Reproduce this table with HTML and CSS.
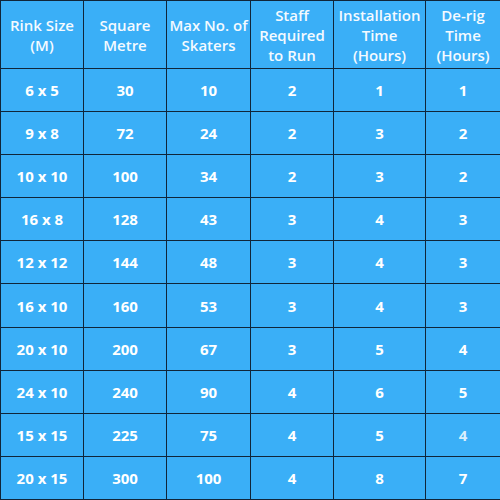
FILE: index.html
```html
<!DOCTYPE html>
<html>
<head>
<meta charset="utf-8">
<link rel="stylesheet" href="styles.css">
</head>
<body>
<table class="rink-table">
  <colgroup>
    <col class="c1"><col class="c2"><col class="c3"><col class="c4"><col class="c5"><col class="c6">
  </colgroup>
  <thead>
    <tr>
      <th>Rink Size<br>(M)</th>
      <th>Square<br>Metre</th>
      <th>Max No. of<br>Skaters</th>
      <th>Staff<br>Required<br>to Run</th>
      <th>Installation<br>Time<br>(Hours)</th>
      <th>De-rig<br>Time<br>(Hours)</th>
    </tr>
  </thead>
  <tbody>
    <tr><td>6 x 5</td><td>30</td><td>10</td><td>2</td><td>1</td><td>1</td></tr>
    <tr><td>9 x 8</td><td>72</td><td>24</td><td>2</td><td>3</td><td>2</td></tr>
    <tr><td>10 x 10</td><td>100</td><td>34</td><td>2</td><td>3</td><td>2</td></tr>
    <tr><td>16 x 8</td><td>128</td><td>43</td><td>3</td><td>4</td><td>3</td></tr>
    <tr><td>12 x 12</td><td>144</td><td>48</td><td>3</td><td>4</td><td>3</td></tr>
    <tr><td>16 x 10</td><td>160</td><td>53</td><td>3</td><td>4</td><td>3</td></tr>
    <tr><td>20 x 10</td><td>200</td><td>67</td><td>3</td><td>5</td><td>4</td></tr>
    <tr><td>24 x 10</td><td>240</td><td>90</td><td>4</td><td>6</td><td>5</td></tr>
    <tr><td>15 x 15</td><td>225</td><td>75</td><td>4</td><td>5</td><td class="faint">4</td></tr>
    <tr><td>20 x 15</td><td>300</td><td>100</td><td>4</td><td>8</td><td>7</td></tr>
  </tbody>
</table>
</body>
</html>
```
FILE: styles.css
```css
html, body {
  margin: 0;
  padding: 0;
  background: #3aaff7;
}
.rink-table {
  width: 500px;
  height: 500px;
  border-collapse: collapse;
  table-layout: fixed;
  font-family: "Open Sans", "Liberation Sans", sans-serif;
  font-weight: 700;
  color: #ffffff;
  background: #3aaff7;
}
.c1 { width: 83px; }
.c2 { width: 83px; }
.c3 { width: 84px; }
.c4 { width: 83px; }
.c5 { width: 92px; }
.c6 { width: 75px; }
.rink-table th,
.rink-table td {
  border: 1.5px solid #10263a;
  text-align: center;
  vertical-align: middle;
  padding: 0;
}
.rink-table th {
  height: 67px;
  font-size: 15px;
  line-height: 20px;
  font-weight: 600;
  color: #f4faff;
}
.rink-table td {
  height: 42px;
  font-size: 15px;
}
.faint { color: #d8eefc; }
```
